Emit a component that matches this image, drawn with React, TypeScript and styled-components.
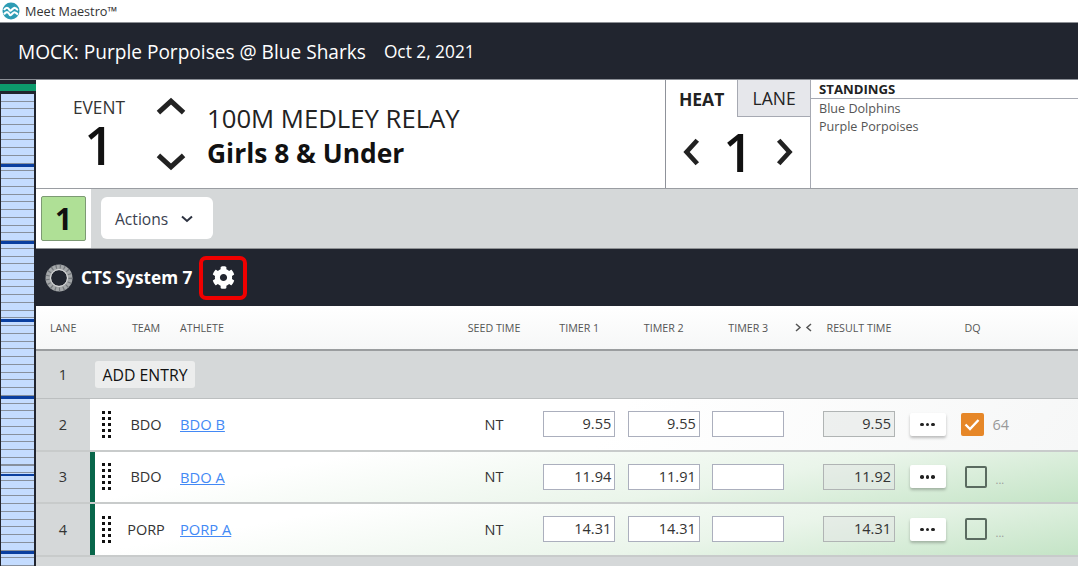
import React from 'react'
import styled, { createGlobalStyle } from 'styled-components'
import { FaCog } from 'react-icons/fa'

const Global = createGlobalStyle`
  html, body { margin: 0; padding: 0; height: 100%; overflow: hidden; background: #d5d8d9; }
  * { box-sizing: border-box; }
  body { font-family: 'Open Sans', 'Noto Sans', sans-serif; color: #222; }
`

const entries = [
  { lane: 2, team: 'BDO', name: 'BDO B', t1: '9.55', t2: '9.55', result: '9.55', dq: true, place: '64', scored: false },
  { lane: 3, team: 'BDO', name: 'BDO A', t1: '11.94', t2: '11.91', result: '11.92', dq: false, place: '...', scored: true },
  { lane: 4, team: 'PORP', name: 'PORP A', t1: '14.31', t2: '14.31', result: '14.31', dq: false, place: '...', scored: true },
]

function Chevron({ dir, size = 28, width = 4.4 }: { dir: 'up' | 'down' | 'left' | 'right'; size?: number; width?: number }) {
  const d = {
    up: 'M3 18 L14 8 L25 18',
    down: 'M3 10 L14 20 L25 10',
    left: 'M18 3 L8 14 L18 25',
    right: 'M10 3 L20 14 L10 25',
  }[dir]
  return (
    <svg width={size} height={size} viewBox="0 0 28 28" fill="none" stroke="#222" strokeWidth={width}>
      <path d={d} />
    </svg>
  )
}

function AppLogo() {
  return (
    <svg width="18" height="18" viewBox="0 0 18 18">
      <circle cx="9" cy="9" r="8.5" fill="#2e9cb4" />
      <path d="M2 8 C4 5 6 5 7.5 8 C9 10.5 11 5 13 6 C14.5 6.5 15 7.5 16 8" fill="none" stroke="#fff" strokeWidth="2.1" />
      <path d="M2 12.4 C4 9.4 6 9.4 7.5 12.4 C9 14.9 11 9.4 13 10.4 C14.5 10.9 15 11.9 16 12.4" fill="none" stroke="#fff" strokeWidth="2.1" />
    </svg>
  )
}

function SystemLogo() {
  return (
    <svg width="28" height="28" viewBox="0 0 28 28">
      <circle cx="14" cy="14" r="10.8" fill="none" stroke="#a4a7a9" strokeWidth="5.4" />
      <circle cx="14" cy="14" r="11.5" fill="none" stroke="#74787c" strokeWidth="4" strokeDasharray="1.2 3" />
      <circle cx="14" cy="14" r="8.4" fill="none" stroke="#e4e4e4" strokeWidth="1" />
    </svg>
  )
}

function Grip() {
  const dots = [0, 1, 2, 3, 4].flatMap(r => [0, 1].map(c => ({ r, c })))
  return (
    <svg width="9" height="27" viewBox="0 0 9 27">
      {dots.map(({ r, c }) => (
        <rect key={`${r}-${c}`} x={c * 6} y={r * 6} width="3" height="3" fill="#111" />
      ))}
    </svg>
  )
}

export default function App() {
  return (
    <>
      <Global />
      <S.Page>
        <S.TitleBar>
          <AppLogo />
          <span>Meet Maestro™</span>
        </S.TitleBar>

        <S.MeetBar>
          <S.MeetName>MOCK: Purple Porpoises @ Blue Sharks</S.MeetName>
          <S.MeetDate>Oct 2, 2021</S.MeetDate>
        </S.MeetBar>

        <S.Body>
          <S.Rail>
            <S.RailGreen />
            <S.RailStripes />
          </S.Rail>

          <S.Main>
            <S.EventPanel>
              <S.EventNumber>
                <S.EventLabel>EVENT</S.EventLabel>
                <S.BigDigit>1</S.BigDigit>
              </S.EventNumber>
              <S.EventArrows>
                <Chevron dir="up" size={32} />
                <Chevron dir="down" size={32} />
              </S.EventArrows>
              <S.EventTitle>
                <S.EventName>100M MEDLEY RELAY</S.EventName>
                <S.EventGroup>Girls 8 &amp; Under</S.EventGroup>
              </S.EventTitle>

              <S.HeatPanel>
                <S.HeatTabs>
                  <S.HeatTab active>HEAT</S.HeatTab>
                  <S.HeatTab>LANE</S.HeatTab>
                </S.HeatTabs>
                <S.HeatPicker>
                  <Chevron dir="left" size={30} />
                  <S.BigDigit>1</S.BigDigit>
                  <Chevron dir="right" size={30} />
                </S.HeatPicker>
              </S.HeatPanel>

              <S.Standings>
                <S.StandingsTitle>STANDINGS</S.StandingsTitle>
                <S.StandingsList>
                  <div>Blue Dolphins</div>
                  <div>Purple Porpoises</div>
                </S.StandingsList>
              </S.Standings>
            </S.EventPanel>

            <S.Toolbar>
              <S.HeatCell>
                <S.HeatBadge>1</S.HeatBadge>
              </S.HeatCell>
              <S.ActionsButton>
                Actions
                <svg width="12" height="8" viewBox="0 0 12 8" fill="none" stroke="#2c3240" strokeWidth="2">
                  <path d="M1 1.5 L6 6 L11 1.5" />
                </svg>
              </S.ActionsButton>
            </S.Toolbar>

            <S.SystemBar>
              <SystemLogo />
              <S.SystemName>CTS System 7</S.SystemName>
              <S.SettingsFrame>
                <FaCog size={23} color="#fff" />
              </S.SettingsFrame>
            </S.SystemBar>

            <S.HeadRow>
              <S.HeadCell>LANE</S.HeadCell>
              <span />
              <S.HeadCell align="center">TEAM</S.HeadCell>
              <S.HeadCell inset={8}>ATHLETE</S.HeadCell>
              <S.HeadCell align="center">SEED TIME</S.HeadCell>
              <S.HeadCell align="center">TIMER 1</S.HeadCell>
              <S.HeadCell align="center">TIMER 2</S.HeadCell>
              <S.HeadCell align="center">TIMER 3</S.HeadCell>
              <S.HeadCell align="center">
                <svg width="17" height="9" viewBox="0 0 17 9" fill="none" stroke="#555" strokeWidth="1.5">
                  <path d="M1 1 L5 4.5 L1 8 M16 1 L12 4.5 L16 8" />
                </svg>
              </S.HeadCell>
              <S.HeadCell align="center">RESULT TIME</S.HeadCell>
              <span />
              <S.HeadCell inset={11}>DQ</S.HeadCell>
            </S.HeadRow>

            <S.EmptyRow>
              <S.LaneCell>1</S.LaneCell>
              <S.AddEntry>ADD ENTRY</S.AddEntry>
            </S.EmptyRow>

            {entries.map(e => (
              <S.EntryRow key={e.lane} scored={e.scored}>
                <S.LaneCell>{e.lane}</S.LaneCell>
                <S.GripCell scored={e.scored}><Grip /></S.GripCell>
                <S.TeamCell>{e.team}</S.TeamCell>
                <S.AthleteCell><a href="#">{e.name}</a></S.AthleteCell>
                <S.SeedCell>NT</S.SeedCell>
                <S.TimeBox>{e.t1}</S.TimeBox>
                <S.TimeBox>{e.t2}</S.TimeBox>
                <S.TimeBox />
                <span />
                <S.TimeBox computed>{e.result}</S.TimeBox>
                <S.MoreCell>
                  <S.MoreButton>
                    <i /><i /><i />
                  </S.MoreButton>
                </S.MoreCell>
                <S.DqCell>
                  <S.DqBox checked={e.dq}>
                    {e.dq && (
                      <svg width="16" height="13" viewBox="0 0 16 13" fill="none" stroke="#fff" strokeWidth="2.4">
                        <path d="M1.5 6.5 L6 11 L14.5 2" />
                      </svg>
                    )}
                  </S.DqBox>
                  <S.DqPlace small={!e.dq}>{e.place}</S.DqPlace>
                </S.DqCell>
              </S.EntryRow>
            ))}

            <S.NextRow>
              <S.NextButton />
            </S.NextRow>
          </S.Main>
        </S.Body>
      </S.Page>
    </>
  )
}

const columns = '54px 30px 52px 279px 86px 84.5px 84.5px 84.5px 26px 85px 52px 1fr'

const S = {
  Page: styled.div`
    width: 1078px;
    height: 566px;
    overflow: hidden;
    display: flex;
    flex-direction: column;
`,

  TitleBar: styled.div`
    height: 23px;
    flex: none;
    display: flex;
    align-items: center;
    gap: 5px;
    padding-left: 2px;
    background: #fff;
    border-bottom: 1px solid #8d9095;
    font-size: 12.7px;
    color: #333;
`,

  MeetBar: styled.div`
    height: 57px;
    flex: none;
    display: flex;
    align-items: center;
    gap: 18px;
    padding: 1px 0 0 18px;
    background: #21252f;
    border-bottom: 1px solid #8b8f96;
    color: #fff;
`,

  MeetName: styled.div`
    font-size: 19.1px;
`,

  MeetDate: styled.div`
    font-size: 17.3px;
`,

  Body: styled.div`
    flex: 1;
    display: flex;
    min-height: 0;
`,

  Rail: styled.div`
    width: 36px;
    flex: none;
    display: flex;
    flex-direction: column;
    background: #21252f;
    padding: 4px 2px 0 0;
`,

  RailGreen: styled.div`
    height: 7px;
    flex: none;
    margin-right: -2px;
    background: #0d9a6c;
`,

  RailStripes: styled.div`
    flex: 1;
    margin: 3px 0 0 1px;
    background:
      repeating-linear-gradient(to bottom, transparent 0, transparent 70px, #0a3fa0 70px, #0a3fa0 72.7px, transparent 72.7px, transparent 77.4px),
      repeating-linear-gradient(to bottom, #c4dcff 0, #c4dcff 6.7px, #87909d 6.7px, #87909d 7.74px);
`,

  Main: styled.div`
    flex: 1;
    min-width: 0;
    display: flex;
    flex-direction: column;
`,

  EventPanel: styled.div`
    height: 109px;
    flex: none;
    display: flex;
    background: #fff;
    border-bottom: 1px solid #9a9da2;
`,

  EventNumber: styled.div`
    width: 126px;
    flex: none;
    padding: 18px 0 0 0;
    display: flex;
    flex-direction: column;
    align-items: center;
`,

  EventLabel: styled.div`
    font-size: 17.3px;
    line-height: 20px;
    color: #333;
`,

  BigDigit: styled.div`
    font-size: 52px;
    font-weight: 600;
    line-height: 54px;
    color: #111;
`,

  EventArrows: styled.div`
    width: 45px;
    flex: none;
    margin-left: -7px;
    padding-top: 12px;
    display: flex;
    flex-direction: column;
    gap: 20px;
`,

  EventTitle: styled.div`
    width: 465px;
    flex: none;
    padding: 21px 0 0 7px;
`,

  EventName: styled.div`
    font-size: 25.7px;
    line-height: 36px;
    color: #222;
`,

  EventGroup: styled.div`
    font-size: 26.4px;
    line-height: 33px;
    font-weight: 700;
    color: #111;
`,

  HeatPanel: styled.div`
    width: 146px;
    flex: none;
    border-left: 1px solid #8f929a;
    border-right: 1px solid #a6a9b2;
`,

  HeatTabs: styled.div`
    height: 37px;
    display: flex;
`,

  HeatTab: styled.div<{ active?: boolean }>`
    width: ${({ active }) => (active ? '71.5px' : '73px')};
    display: flex;
    align-items: center;
    justify-content: center;
    font-size: 17.5px;
    font-weight: ${({ active }) => (active ? 700 : 400)};
    background: ${({ active }) => (active ? '#fff' : '#e6e7eb')};
    border-left: ${({ active }) => (active ? 'none' : '1px solid #a6a9b2')};
    border-bottom: ${({ active }) => (active ? 'none' : '1px solid #a6a9b2')};
`,

  HeatPicker: styled.div`
    height: 70px;
    display: flex;
    align-items: center;
    justify-content: space-between;
    padding: 0 12px 0 12px;
`,

  Standings: styled.div`
    flex: 1;
`,

  StandingsTitle: styled.div`
    height: 19px;
    padding-left: 8px;
    font-size: 13.2px;
    line-height: 18px;
    font-weight: 700;
    color: #222;
    border-bottom: 1px solid #a6a9b2;
`,

  StandingsList: styled.div`
    padding: 1px 0 0 8px;
    font-size: 12.6px;
    line-height: 18px;
    color: #555;
`,

  Toolbar: styled.div`
    height: 60px;
    flex: none;
    display: flex;
    align-items: flex-start;
    gap: 10px;
    background: #d5d8d9;
    border-bottom: 1px solid #8e9194;
`,

  HeatCell: styled.div`
    width: 55px;
    height: 59px;
    padding: 7px 5px 0;
    background: #fff;
`,

  HeatBadge: styled.div`
    width: 45px;
    height: 45px;
    display: flex;
    align-items: center;
    justify-content: center;
    font-size: 30px;
    font-weight: 700;
    color: #111;
    background: #afe096;
    border: 1px solid #7d9a74;
    border-radius: 2px;
`,

  ActionsButton: styled.div`
    width: 112px;
    height: 42px;
    margin-top: 8px;
    display: flex;
    align-items: center;
    gap: 13px;
    padding: 1px 0 0 14px;
    font-size: 15.6px;
    color: #3a4150;
    background: #fff;
    border-radius: 6px;
`,

  SystemBar: styled.div`
    height: 57px;
    flex: none;
    display: flex;
    align-items: center;
    padding-left: 9px;
    background: #21252f;
`,

  SystemName: styled.div`
    margin-left: 8px;
    font-size: 17.2px;
    font-weight: 700;
    color: #fff;
`,

  SettingsFrame: styled.div`
    width: 48px;
    height: 44px;
    margin-left: 7px;
    display: flex;
    align-items: center;
    justify-content: center;
    border: 4px solid #f00000;
    border-radius: 7px;
`,

  HeadRow: styled.div`
    height: 45px;
    flex: none;
    display: grid;
    grid-template-columns: ${columns};
    align-items: center;
    background: linear-gradient(to bottom, #ffffff, #f6f7f7);
    border-bottom: 2px solid #9a9d9f;
`,

  HeadCell: styled.div<{ align?: string; inset?: number }>`
    font-size: 10.7px;
    color: #555;
    text-align: ${({ align }) => align || 'left'};
    padding-left: ${({ inset }) => inset || 0}px;
    white-space: nowrap;
    &:first-child { padding-left: 14px; }
`,

  EmptyRow: styled.div`
    height: 48px;
    flex: none;
    display: flex;
    align-items: center;
    background: #d5d8d9;
    border-bottom: 1px solid #bcbfc0;
`,

  LaneCell: styled.div`
    width: 54px;
    flex: none;
    align-self: stretch;
    display: flex;
    align-items: center;
    justify-content: center;
    font-size: 14.5px;
    color: #333;
    background: #d5d8d9;
`,

  AddEntry: styled.div`
    width: 100px;
    height: 27px;
    margin-left: 5px;
    display: flex;
    align-items: center;
    justify-content: center;
    font-size: 15.8px;
    color: #111;
    background: #eceded;
    border-radius: 3px;
`,

  EntryRow: styled.div<{ scored: boolean }>`
    height: 52.6px;
    flex: none;
    display: grid;
    grid-template-columns: ${columns};
    align-items: center;
    background: ${({ scored }) => (scored
      ? 'linear-gradient(170deg, #ffffff 25%, #eaf5ea 65%, #c4e4c6 100%)'
      : 'linear-gradient(125deg, #ffffff 55%, #f6f7f7 100%)')};
    border-bottom: 2px solid #c8cbcb;
`,

  GripCell: styled.div<{ scored: boolean }>`
    align-self: stretch;
    display: flex;
    align-items: center;
    padding-left: 7px;
    border-left: 5px solid ${({ scored }) => (scored ? '#08664a' : '#fff')};
`,

  TeamCell: styled.div`
    font-size: 14.5px;
    color: #333;
    text-align: center;
`,

  AthleteCell: styled.div`
    padding-left: 8px;
    font-size: 14.7px;
    & a { color: #4389f5; }
`,

  SeedCell: styled.div`
    font-size: 14.5px;
    color: #333;
    text-align: center;
`,

  TimeBox: styled.div<{ computed?: boolean }>`
    width: 72px;
    height: 26px;
    justify-self: center;
    padding-right: 3px;
    font-size: 14.5px;
    line-height: 24px;
    text-align: right;
    color: #333;
    background: ${({ computed }) => (computed ? 'rgba(225, 230, 228, 0.55)' : '#fff')};
    border: 1px solid ${({ computed }) => (computed ? '#b0b4b4' : '#abafbd')};
`,

  MoreCell: styled.div`
    display: flex;
    justify-content: center;
`,

  MoreButton: styled.div`
    width: 36px;
    height: 23px;
    display: flex;
    align-items: center;
    justify-content: center;
    gap: 2px;
    background: #fff;
    border-radius: 2px;
    box-shadow: 0 2px 3px rgba(0, 0, 0, 0.25);
    & i { width: 3.5px; height: 3.5px; border-radius: 50%; background: #222; }
`,

  DqCell: styled.div`
    display: flex;
    align-items: center;
    gap: 9px;
    padding-left: 7px;
`,

  DqBox: styled.div<{ checked: boolean }>`
    width: ${({ checked }) => (checked ? '23px' : '22px')};
    height: ${({ checked }) => (checked ? '23px' : '22px')};
    margin-left: ${({ checked }) => (checked ? 0 : '4px')};
    display: flex;
    align-items: center;
    justify-content: center;
    background: ${({ checked }) => (checked ? '#e68728' : 'transparent')};
    border: ${({ checked }) => (checked ? 'none' : '2px solid #5a6b60')};
    border-radius: 2px;
`,

  DqPlace: styled.div<{ small: boolean }>`
    font-size: 14.5px;
    color: #999;
    ${({ small }) => small && 'font-size: 11px; margin-top: 6px;'}
`,

  NextRow: styled.div`
    flex: 1;
    padding: 9px 0 0 59px;
    background: #d5d8d9;
`,

  NextButton: styled.div`
    width: 100px;
    height: 27px;
    background: #eceded;
    border-radius: 3px;
`,
}
